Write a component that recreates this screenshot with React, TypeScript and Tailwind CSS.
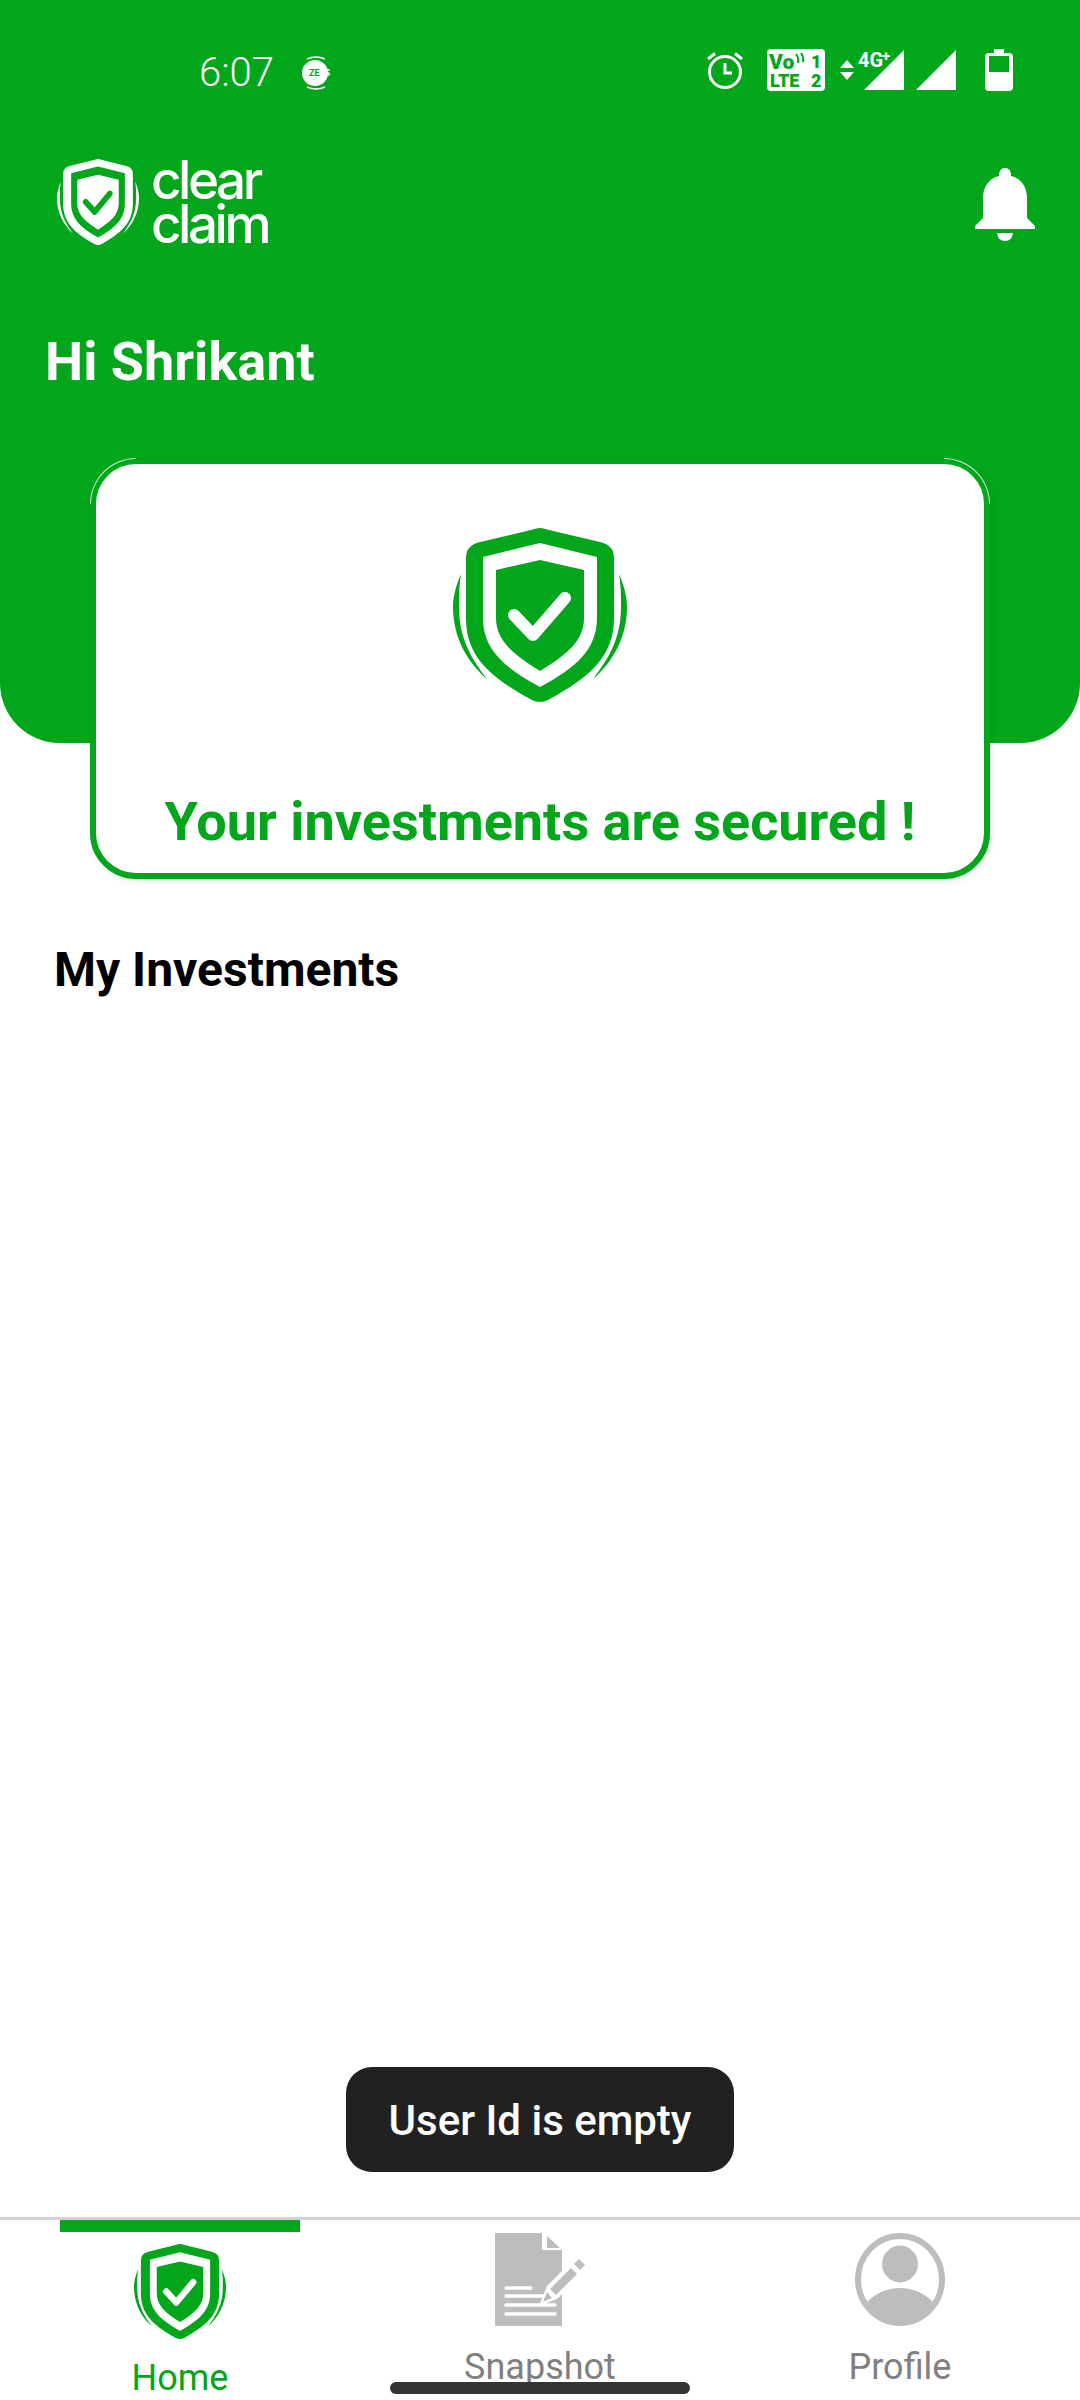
const GREEN = '#02a61a'
const GRAY = '#bdbdbd'

function ShieldIcon({ fg, bg, className }: { fg: string; bg: string; className: string }) {
  return (
    <svg viewBox="0 0 174 174" preserveAspectRatio="none" className={className}>
      <path
        d="M87 0Q90 0 96 2L147 14Q161 17 161 30V90C161 130 135 150 95 172Q87 176 79 172C39 150 13 130 13 90V30Q13 17 27 14L78 2Q84 0 87 0Z"
        fill={fg}
      />
      <path d="M87 15L144 29V90C144 122 122 140 87 159C52 140 30 122 30 90V29Z" fill={bg} />
      <path d="M87 32L131 42V90C131 113 113 127 87 143C61 127 43 113 43 90V42Z" fill={fg} />
      <path d="M61 87L80 107L112 70" fill="none" stroke={bg} strokeWidth="12" strokeLinecap="round" strokeLinejoin="round" />
      <path d="M8 46C2 60 0 70 0 79C0 110 15 135 34 151C18 130 6 110 6 79C6 68 6 58 8 46Z" fill={fg} />
      <path d="M166 46C172 60 174 70 174 79C174 110 159 135 140 151C156 130 168 110 168 79C168 68 168 58 166 46Z" fill={fg} />
    </svg>
  )
}

function StatusBar() {
  return (
    <div className="flex h-[94px] items-end justify-between pl-[199px] pr-[67px]">
      <div className="-mb-[2px] flex items-center gap-[26px]">
        <span className="text-[40px] font-light leading-[46px] text-white">6:07</span>
        <svg viewBox="0 0 34 34" className="h-[34px] w-[34px] overflow-visible">
          <circle cx="15" cy="17" r="13" fill="white" />
          <path d="M7 3Q16 -1 25 3M7 31Q16 35 25 31" fill="none" stroke="white" strokeWidth="1.5" />
          <text x="9" y="20" fontSize="9" fontWeight="700" fontFamily="Roboto, sans-serif">
            <tspan fill={GREEN}>ZE</tspan>
            <tspan fill="white">ES</tspan>
          </text>
        </svg>
      </div>
      <div className="mb-[3px] flex items-center">
        <svg viewBox="0 0 40 40" className="mr-[22px] h-[40px] w-[40px]">
          <circle cx="20" cy="22" r="15.5" fill="none" stroke="white" strokeWidth="3" />
          <path d="M20 13V23H27" fill="none" stroke="white" strokeWidth="3" />
          <path d="M3 9L10 3.5M37 9L30 3.5" fill="none" stroke="white" strokeWidth="3" />
        </svg>
        <svg viewBox="0 0 58 42" className="mr-[14px] h-[42px] w-[58px]">
          <rect width="58" height="42" rx="4" fill="white" />
          <g fontFamily="Roboto, sans-serif" fontWeight="900" fill={GREEN}>
            <text x="2" y="20" fontSize="21">Vo</text>
            <text x="44" y="19" fontSize="18">1</text>
            <text x="3" y="38" fontSize="18">LTE</text>
            <text x="44" y="38" fontSize="18">2</text>
          </g>
          <path d="M29 5Q32 9 31 14M34 4Q37 8 36 13" fill="none" stroke={GREEN} strokeWidth="2" />
        </svg>
        <svg viewBox="0 0 68 42" className="h-[42px] w-[68px] overflow-visible">
          <path d="M1 12L8 4L15 12ZM1 16L8 24L15 16Z" fill="white" transform="translate(0 7)" />
          <text x="19" y="18" fontSize="20" fontWeight="700" fontFamily="Roboto, sans-serif" fill="white">4G</text>
          <text x="43" y="12" fontSize="15" fontWeight="700" fontFamily="Roboto, sans-serif" fill="white">+</text>
          <path d="M25 41L65 1V41Z" fill="white" />
        </svg>
        <svg viewBox="0 0 40 40" className="ml-[9px] h-[40px] w-[40px]">
          <path d="M0 40L40 0V40Z" fill="white" />
        </svg>
        <svg viewBox="0 0 28 42" className="ml-[29px] h-[42px] w-[28px]">
          <path d="M9 0H19V4H24Q28 4 28 8V38Q28 42 24 42H4Q0 42 0 38V8Q0 4 4 4H9Z" fill="white" />
          <rect x="4" y="7" width="20" height="16" fill={GREEN} />
        </svg>
      </div>
    </div>
  )
}

function Logo() {
  return (
    <div className="flex items-center gap-[12px]">
      <ShieldIcon fg="white" bg={GREEN} className="h-[86px] w-[82px]" />
      <div
        className="flex flex-col text-[53px] font-medium leading-[44px] tracking-[-3.5px] text-white"
        style={{ fontFamily: 'Inter, sans-serif' }}
      >
        <span>clear</span>
        <span>claim</span>
      </div>
    </div>
  )
}

function Bell() {
  return (
    <svg viewBox="0 0 60 73" className="mt-[10px] h-[73px] w-[60px]">
      <path
        d="M24 8Q24 0 30 0Q36 0 36 8C46 10 52 19 52 30V50L60 58V61H0V58L8 50V30C8 19 14 10 24 8Z"
        fill="white"
      />
      <path d="M22 65H38Q37 73 30 73Q23 73 22 65Z" fill="white" />
    </svg>
  )
}

function SnapshotIcon() {
  return (
    <svg viewBox="0 0 90 93" className="h-[93px] w-[90px]">
      <path d="M0 0H47V17H67V93H0Z" fill={GRAY} />
      <path d="M52 3L65 15H52Z" fill={GRAY} />
      <g stroke="white" strokeWidth="3.5" strokeLinecap="round">
        <path d="M11 55H36M11 63H60M11 72H60M11 81H60" />
      </g>
      <path d="M44 73L52 53L78 27L90 39L62 66Z" fill="white" />
      <path d="M55 56L76 35L82 41L61 62Z" fill={GRAY} />
      <path d="M79 31L84 26L90 32L85 37Z" fill={GRAY} />
      <path d="M48 69L52 59L57 65Z" fill={GRAY} />
    </svg>
  )
}

function ProfileIcon() {
  return (
    <svg viewBox="0 0 90 93" className="h-[93px] w-[90px]">
      <ellipse cx="45" cy="46.5" rx="42" ry="43.5" fill="none" stroke={GRAY} strokeWidth="6" />
      <ellipse cx="45" cy="31" rx="18" ry="18.5" fill={GRAY} />
      <path d="M12 69Q26 55 45 55Q64 55 78 69C70 84 58 93 45 93C32 93 20 84 12 69Z" fill={GRAY} />
    </svg>
  )
}

export default function App() {
  return (
    <div
      className="relative flex h-[2400px] w-[1080px] flex-col overflow-hidden bg-white"
      style={{ fontFamily: 'Roboto, sans-serif' }}
    >
      {/* Header */}
      <div className="h-[743px] rounded-b-[60px] bg-[#02a61a]">
        <StatusBar />
        <div className="flex items-start justify-between pl-[57px] pr-[45px] pt-[64px]">
          <Logo />
          <Bell />
        </div>
        <h1 className="pl-[45px] pt-[84px] text-[54px] font-bold leading-[64px] text-white">Hi Shrikant</h1>
      </div>

      {/* Card */}
      <div className="relative mx-[90px] mt-[-285px] flex h-[421px] flex-col items-center rounded-[46px] border-[6px] border-[#02a61a] bg-white shadow-[2px_3px_6px_rgba(0,0,0,0.08)]">
        <div className="absolute -left-[6px] -top-[6px] h-[46px] w-[46px] rounded-tl-[46px] border-l border-t border-white/80" />
        <div className="absolute -right-[6px] -top-[6px] h-[46px] w-[46px] rounded-tr-[46px] border-r border-t border-white/80" />
        <ShieldIcon fg={GREEN} bg="white" className="mt-[64px] h-[174px] w-[174px]" />
        <p className="mt-[89px] text-[54px] font-bold leading-[62px] text-[#02a61a]">Your investments are secured !</p>
      </div>

      <h2 className="pl-[54px] pt-[64px] text-[48px] font-bold leading-[54px] text-black">My Investments</h2>

      <div className="flex-1" />

      {/* Bottom nav */}
      <nav className="flex h-[183px] border-t-[3px] border-[#d2d2d2]">
        <div className="flex w-[360px] flex-col items-center">
          <div className="h-[12px] w-[240px] bg-[#02a61a]" />
          <ShieldIcon fg={GREEN} bg="white" className="mt-[12px] h-[95px] w-[92px]" />
          <span className="mt-[18px] text-[36px] leading-[42px] text-[#02a61a]">Home</span>
        </div>
        <div className="flex w-[360px] flex-col items-center pt-[13px]">
          <SnapshotIcon />
          <span className="mt-[20px] text-[36px] leading-[42px] text-[#808080]">Snapshot</span>
        </div>
        <div className="flex w-[360px] flex-col items-center pt-[13px]">
          <ProfileIcon />
          <span className="mt-[20px] text-[36px] leading-[42px] text-[#808080]">Profile</span>
        </div>
      </nav>

      {/* Toast */}
      <div className="absolute bottom-[228px] left-[346px] flex h-[105px] w-[388px] items-center justify-center rounded-[26px] bg-[#212121] pt-[2px] text-[42px] font-medium text-white">
        User Id is empty
      </div>

      {/* Home indicator */}
      <div className="absolute bottom-[6px] left-[390px] h-[12px] w-[300px] rounded-full bg-[#333333]" />
    </div>
  )
}
